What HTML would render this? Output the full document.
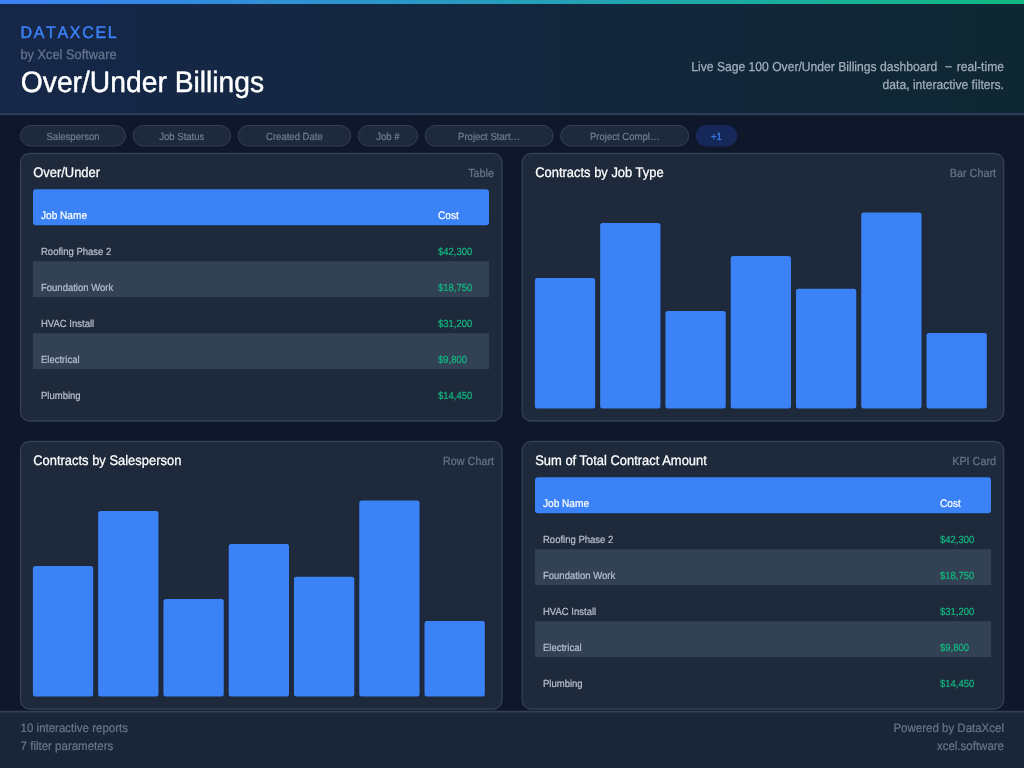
<!DOCTYPE html><html><head><meta charset="utf-8"><title>Over/Under Billings</title><style>html,body{margin:0;padding:0;background:#0f172a;overflow:hidden}svg{display:block;will-change:transform}text{font-family:"Liberation Sans",sans-serif;text-rendering:geometricPrecision}</style></head><body>
<svg width="1024" height="768" viewBox="0 0 1024 768">
<defs><linearGradient id="tb" x1="0" y1="0" x2="1" y2="0"><stop offset="0" stop-color="#3b82f6"/><stop offset="1" stop-color="#10b981"/></linearGradient>
<linearGradient id="hd" x1="0" y1="0" x2="1" y2="0"><stop offset="0" stop-color="#162749"/><stop offset="1" stop-color="#0f2733"/></linearGradient></defs>
<rect width="1024" height="768" fill="#0f172a"/>
<rect x="0" y="0" width="1024" height="114" fill="url(#hd)"/>
<rect x="0" y="0" width="1024" height="4" fill="url(#tb)"/>
<rect x="0" y="113" width="1024" height="2.2" fill="#2d3d58"/>
<text x="20.4" y="38" font-size="16" fill="#3b82f6" stroke="#3b82f6" stroke-width="0.42" transform="translate(0 38) scale(1 1.048) translate(0 -38)" letter-spacing="1.7" style="font-kerning:none">DATAXCEL</text>
<text x="20.5" y="59" font-size="12.8" fill="#64748b" stroke="#64748b" stroke-width="0.26" transform="translate(0 59) scale(1 1.068) translate(0 -59)">by Xcel Software</text>
<text x="20.8" y="92" font-size="28.25" fill="#ffffff" stroke="#ffffff" stroke-width="0.4" transform="translate(0 92) scale(1 1.046) translate(0 -92)">Over/Under Billings</text>
<text x="937.3" y="71" font-size="12.13" fill="#a3adbd" stroke="#a3adbd" stroke-width="0.24" text-anchor="end" transform="translate(0 71) scale(1 1.072) translate(0 -71)">Live Sage 100 Over/Under Billings dashboard</text>
<rect x="945.2" y="66.2" width="6.6" height="1.2" fill="#a3adbd"/>
<text x="1004" y="71" font-size="12.13" fill="#a3adbd" stroke="#a3adbd" stroke-width="0.24" text-anchor="end" transform="translate(0 71) scale(1 1.072) translate(0 -71)">real-time</text>
<text x="1004" y="89" font-size="12.15" fill="#a3adbd" stroke="#a3adbd" stroke-width="0.24" text-anchor="end" transform="translate(0 89) scale(1 1.072) translate(0 -89)">data, interactive filters.</text>
<rect x="20.5" y="125.5" width="105.0" height="20.5" rx="10.25" fill="#1e293b" stroke="#334155"/>
<text x="73.0" y="140.0" font-size="9.55" fill="#6f7d96" stroke="#6f7d96" stroke-width="0.19" text-anchor="middle" transform="translate(0 140.0) scale(1 1.088) translate(0 -140.0)">Salesperson</text>
<rect x="133.1" y="125.5" width="97.4" height="20.5" rx="10.25" fill="#1e293b" stroke="#334155"/>
<text x="181.8" y="140.0" font-size="9.55" fill="#6f7d96" stroke="#6f7d96" stroke-width="0.19" text-anchor="middle" transform="translate(0 140.0) scale(1 1.088) translate(0 -140.0)">Job Status</text>
<rect x="238.1" y="125.5" width="112.6" height="20.5" rx="10.25" fill="#1e293b" stroke="#334155"/>
<text x="294.4" y="140.0" font-size="9.55" fill="#6f7d96" stroke="#6f7d96" stroke-width="0.19" text-anchor="middle" transform="translate(0 140.0) scale(1 1.088) translate(0 -140.0)">Created Date</text>
<rect x="358.3" y="125.5" width="59.2" height="20.5" rx="10.25" fill="#1e293b" stroke="#334155"/>
<text x="387.9" y="140.0" font-size="9.55" fill="#6f7d96" stroke="#6f7d96" stroke-width="0.19" text-anchor="middle" transform="translate(0 140.0) scale(1 1.088) translate(0 -140.0)">Job #</text>
<rect x="425.1" y="125.5" width="128.0" height="20.5" rx="10.25" fill="#1e293b" stroke="#334155"/>
<text x="489.1" y="140.0" font-size="9.55" fill="#6f7d96" stroke="#6f7d96" stroke-width="0.19" text-anchor="middle" transform="translate(0 140.0) scale(1 1.088) translate(0 -140.0)">Project Start…</text>
<rect x="560.7" y="125.5" width="128.0" height="20.5" rx="10.25" fill="#1e293b" stroke="#334155"/>
<text x="624.7" y="140.0" font-size="9.55" fill="#6f7d96" stroke="#6f7d96" stroke-width="0.19" text-anchor="middle" transform="translate(0 140.0) scale(1 1.088) translate(0 -140.0)">Project Compl…</text>
<rect x="695.8" y="125" width="41.4" height="21.5" rx="10.75" fill="#1e3a8a" opacity="0.5"/>
<text x="716.5" y="140.0" font-size="9.55" fill="#3b82f6" stroke="#3b82f6" stroke-width="0.19" text-anchor="middle" transform="translate(0 140.0) scale(1 1.088) translate(0 -140.0)">+1</text>
<rect x="20.5" y="153.5" width="481.5" height="267.5" rx="9" fill="#1e293b" stroke="#334155" stroke-width="1.3"/>
<text x="33.2" y="177" font-size="12.95" fill="#ffffff" stroke="#ffffff" stroke-width="0.26" transform="translate(0 177) scale(1 1.068) translate(0 -177)">Over/Under</text>
<text x="494" y="176.8" font-size="10.8" fill="#64748b" stroke="#64748b" stroke-width="0.22" text-anchor="end" transform="translate(0 176.8) scale(1 1.078) translate(0 -176.8)">Table</text>
<rect x="33" y="189.2" width="456" height="36" rx="3" fill="#3b82f6"/>
<text x="41" y="219.0" font-size="10.1" fill="#ffffff" stroke="#ffffff" stroke-width="0.2" transform="translate(0 219.0) scale(1 1.084) translate(0 -219.0)">Job Name</text>
<text x="438" y="219.0" font-size="10.1" fill="#ffffff" stroke="#ffffff" stroke-width="0.2" transform="translate(0 219.0) scale(1 1.084) translate(0 -219.0)">Cost</text>
<text x="41" y="254.8" font-size="9.5" fill="#b6c0ce" stroke="#b6c0ce" stroke-width="0.19" transform="translate(0 254.8) scale(1 1.088) translate(0 -254.8)">Roofing Phase 2</text>
<text x="438" y="254.8" font-size="9.5" fill="#10b981" stroke="#10b981" stroke-width="0.19" transform="translate(0 254.8) scale(1 1.088) translate(0 -254.8)">$42,300</text>
<rect x="33" y="261.2" width="456" height="36" fill="#334155"/>
<text x="41" y="290.8" font-size="9.5" fill="#b6c0ce" stroke="#b6c0ce" stroke-width="0.19" transform="translate(0 290.8) scale(1 1.088) translate(0 -290.8)">Foundation Work</text>
<text x="438" y="290.8" font-size="9.5" fill="#10b981" stroke="#10b981" stroke-width="0.19" transform="translate(0 290.8) scale(1 1.088) translate(0 -290.8)">$18,750</text>
<text x="41" y="326.8" font-size="9.5" fill="#b6c0ce" stroke="#b6c0ce" stroke-width="0.19" transform="translate(0 326.8) scale(1 1.088) translate(0 -326.8)">HVAC Install</text>
<text x="438" y="326.8" font-size="9.5" fill="#10b981" stroke="#10b981" stroke-width="0.19" transform="translate(0 326.8) scale(1 1.088) translate(0 -326.8)">$31,200</text>
<rect x="33" y="333.2" width="456" height="36" fill="#334155"/>
<text x="41" y="362.8" font-size="9.5" fill="#b6c0ce" stroke="#b6c0ce" stroke-width="0.19" transform="translate(0 362.8) scale(1 1.088) translate(0 -362.8)">Electrical</text>
<text x="438" y="362.8" font-size="9.5" fill="#10b981" stroke="#10b981" stroke-width="0.19" transform="translate(0 362.8) scale(1 1.088) translate(0 -362.8)">$9,800</text>
<text x="41" y="398.8" font-size="9.5" fill="#b6c0ce" stroke="#b6c0ce" stroke-width="0.19" transform="translate(0 398.8) scale(1 1.088) translate(0 -398.8)">Plumbing</text>
<text x="438" y="398.8" font-size="9.5" fill="#10b981" stroke="#10b981" stroke-width="0.19" transform="translate(0 398.8) scale(1 1.088) translate(0 -398.8)">$14,450</text>
<rect x="522.2" y="153.5" width="481.5" height="267.5" rx="9" fill="#1e293b" stroke="#334155" stroke-width="1.3"/>
<text x="535.2" y="177" font-size="12.95" fill="#ffffff" stroke="#ffffff" stroke-width="0.26" transform="translate(0 177) scale(1 1.068) translate(0 -177)">Contracts by Job Type</text>
<text x="996" y="176.8" font-size="10.8" fill="#64748b" stroke="#64748b" stroke-width="0.22" text-anchor="end" transform="translate(0 176.8) scale(1 1.078) translate(0 -176.8)">Bar Chart</text>
<rect x="534.90" y="277.90" width="60.3" height="130.50" rx="2.5" fill="#3b82f6"/>
<rect x="600.17" y="223.10" width="60.3" height="185.30" rx="2.5" fill="#3b82f6"/>
<rect x="665.44" y="311.10" width="60.3" height="97.30" rx="2.5" fill="#3b82f6"/>
<rect x="730.71" y="256.10" width="60.3" height="152.30" rx="2.5" fill="#3b82f6"/>
<rect x="795.98" y="288.70" width="60.3" height="119.70" rx="2.5" fill="#3b82f6"/>
<rect x="861.25" y="212.60" width="60.3" height="195.80" rx="2.5" fill="#3b82f6"/>
<rect x="926.52" y="332.90" width="60.3" height="75.50" rx="2.5" fill="#3b82f6"/>
<rect x="20.5" y="441.5" width="481.5" height="267.5" rx="9" fill="#1e293b" stroke="#334155" stroke-width="1.3"/>
<text x="33.2" y="465" font-size="12.95" fill="#ffffff" stroke="#ffffff" stroke-width="0.26" transform="translate(0 465) scale(1 1.068) translate(0 -465)">Contracts by Salesperson</text>
<text x="494" y="464.8" font-size="10.8" fill="#64748b" stroke="#64748b" stroke-width="0.22" text-anchor="end" transform="translate(0 464.8) scale(1 1.078) translate(0 -464.8)">Row Chart</text>
<rect x="32.90" y="565.90" width="60.3" height="130.50" rx="2.5" fill="#3b82f6"/>
<rect x="98.17" y="511.10" width="60.3" height="185.30" rx="2.5" fill="#3b82f6"/>
<rect x="163.44" y="599.10" width="60.3" height="97.30" rx="2.5" fill="#3b82f6"/>
<rect x="228.71" y="544.10" width="60.3" height="152.30" rx="2.5" fill="#3b82f6"/>
<rect x="293.98" y="576.70" width="60.3" height="119.70" rx="2.5" fill="#3b82f6"/>
<rect x="359.25" y="500.60" width="60.3" height="195.80" rx="2.5" fill="#3b82f6"/>
<rect x="424.52" y="620.90" width="60.3" height="75.50" rx="2.5" fill="#3b82f6"/>
<rect x="522.2" y="441.5" width="481.5" height="267.5" rx="9" fill="#1e293b" stroke="#334155" stroke-width="1.3"/>
<text x="535.2" y="465" font-size="12.95" fill="#ffffff" stroke="#ffffff" stroke-width="0.26" transform="translate(0 465) scale(1 1.068) translate(0 -465)">Sum of Total Contract Amount</text>
<text x="996" y="464.8" font-size="10.8" fill="#64748b" stroke="#64748b" stroke-width="0.22" text-anchor="end" transform="translate(0 464.8) scale(1 1.078) translate(0 -464.8)">KPI Card</text>
<rect x="535" y="477.2" width="456" height="36" rx="3" fill="#3b82f6"/>
<text x="543" y="507.0" font-size="10.1" fill="#ffffff" stroke="#ffffff" stroke-width="0.2" transform="translate(0 507.0) scale(1 1.084) translate(0 -507.0)">Job Name</text>
<text x="940" y="507.0" font-size="10.1" fill="#ffffff" stroke="#ffffff" stroke-width="0.2" transform="translate(0 507.0) scale(1 1.084) translate(0 -507.0)">Cost</text>
<text x="543" y="542.8" font-size="9.5" fill="#b6c0ce" stroke="#b6c0ce" stroke-width="0.19" transform="translate(0 542.8) scale(1 1.088) translate(0 -542.8)">Roofing Phase 2</text>
<text x="940" y="542.8" font-size="9.5" fill="#10b981" stroke="#10b981" stroke-width="0.19" transform="translate(0 542.8) scale(1 1.088) translate(0 -542.8)">$42,300</text>
<rect x="535" y="549.2" width="456" height="36" fill="#334155"/>
<text x="543" y="578.8" font-size="9.5" fill="#b6c0ce" stroke="#b6c0ce" stroke-width="0.19" transform="translate(0 578.8) scale(1 1.088) translate(0 -578.8)">Foundation Work</text>
<text x="940" y="578.8" font-size="9.5" fill="#10b981" stroke="#10b981" stroke-width="0.19" transform="translate(0 578.8) scale(1 1.088) translate(0 -578.8)">$18,750</text>
<text x="543" y="614.8" font-size="9.5" fill="#b6c0ce" stroke="#b6c0ce" stroke-width="0.19" transform="translate(0 614.8) scale(1 1.088) translate(0 -614.8)">HVAC Install</text>
<text x="940" y="614.8" font-size="9.5" fill="#10b981" stroke="#10b981" stroke-width="0.19" transform="translate(0 614.8) scale(1 1.088) translate(0 -614.8)">$31,200</text>
<rect x="535" y="621.2" width="456" height="36" fill="#334155"/>
<text x="543" y="650.8" font-size="9.5" fill="#b6c0ce" stroke="#b6c0ce" stroke-width="0.19" transform="translate(0 650.8) scale(1 1.088) translate(0 -650.8)">Electrical</text>
<text x="940" y="650.8" font-size="9.5" fill="#10b981" stroke="#10b981" stroke-width="0.19" transform="translate(0 650.8) scale(1 1.088) translate(0 -650.8)">$9,800</text>
<text x="543" y="686.8" font-size="9.5" fill="#b6c0ce" stroke="#b6c0ce" stroke-width="0.19" transform="translate(0 686.8) scale(1 1.088) translate(0 -686.8)">Plumbing</text>
<text x="940" y="686.8" font-size="9.5" fill="#10b981" stroke="#10b981" stroke-width="0.19" transform="translate(0 686.8) scale(1 1.088) translate(0 -686.8)">$14,450</text>
<rect x="0" y="711" width="1024" height="57" fill="#1b2538"/>
<rect x="0" y="710.7" width="1024" height="1.3" fill="#334155"/>
<rect x="0" y="712" width="1024" height="1" fill="#263247"/>
<text x="20.6" y="732.3" font-size="11.5" fill="#64748b" stroke="#64748b" stroke-width="0.23" transform="translate(0 732.3) scale(1 1.075) translate(0 -732.3)">10 interactive reports</text>
<text x="20.6" y="750.3" font-size="11.5" fill="#64748b" stroke="#64748b" stroke-width="0.23" transform="translate(0 750.3) scale(1 1.075) translate(0 -750.3)">7 filter parameters</text>
<text x="1004" y="732.2" font-size="11.5" fill="#64748b" stroke="#64748b" stroke-width="0.23" text-anchor="end" transform="translate(0 732.2) scale(1 1.075) translate(0 -732.2)">Powered by DataXcel</text>
<text x="1004" y="750.2" font-size="11.5" fill="#64748b" stroke="#64748b" stroke-width="0.23" text-anchor="end" transform="translate(0 750.2) scale(1 1.075) translate(0 -750.2)">xcel.software</text>
</svg></body></html>
